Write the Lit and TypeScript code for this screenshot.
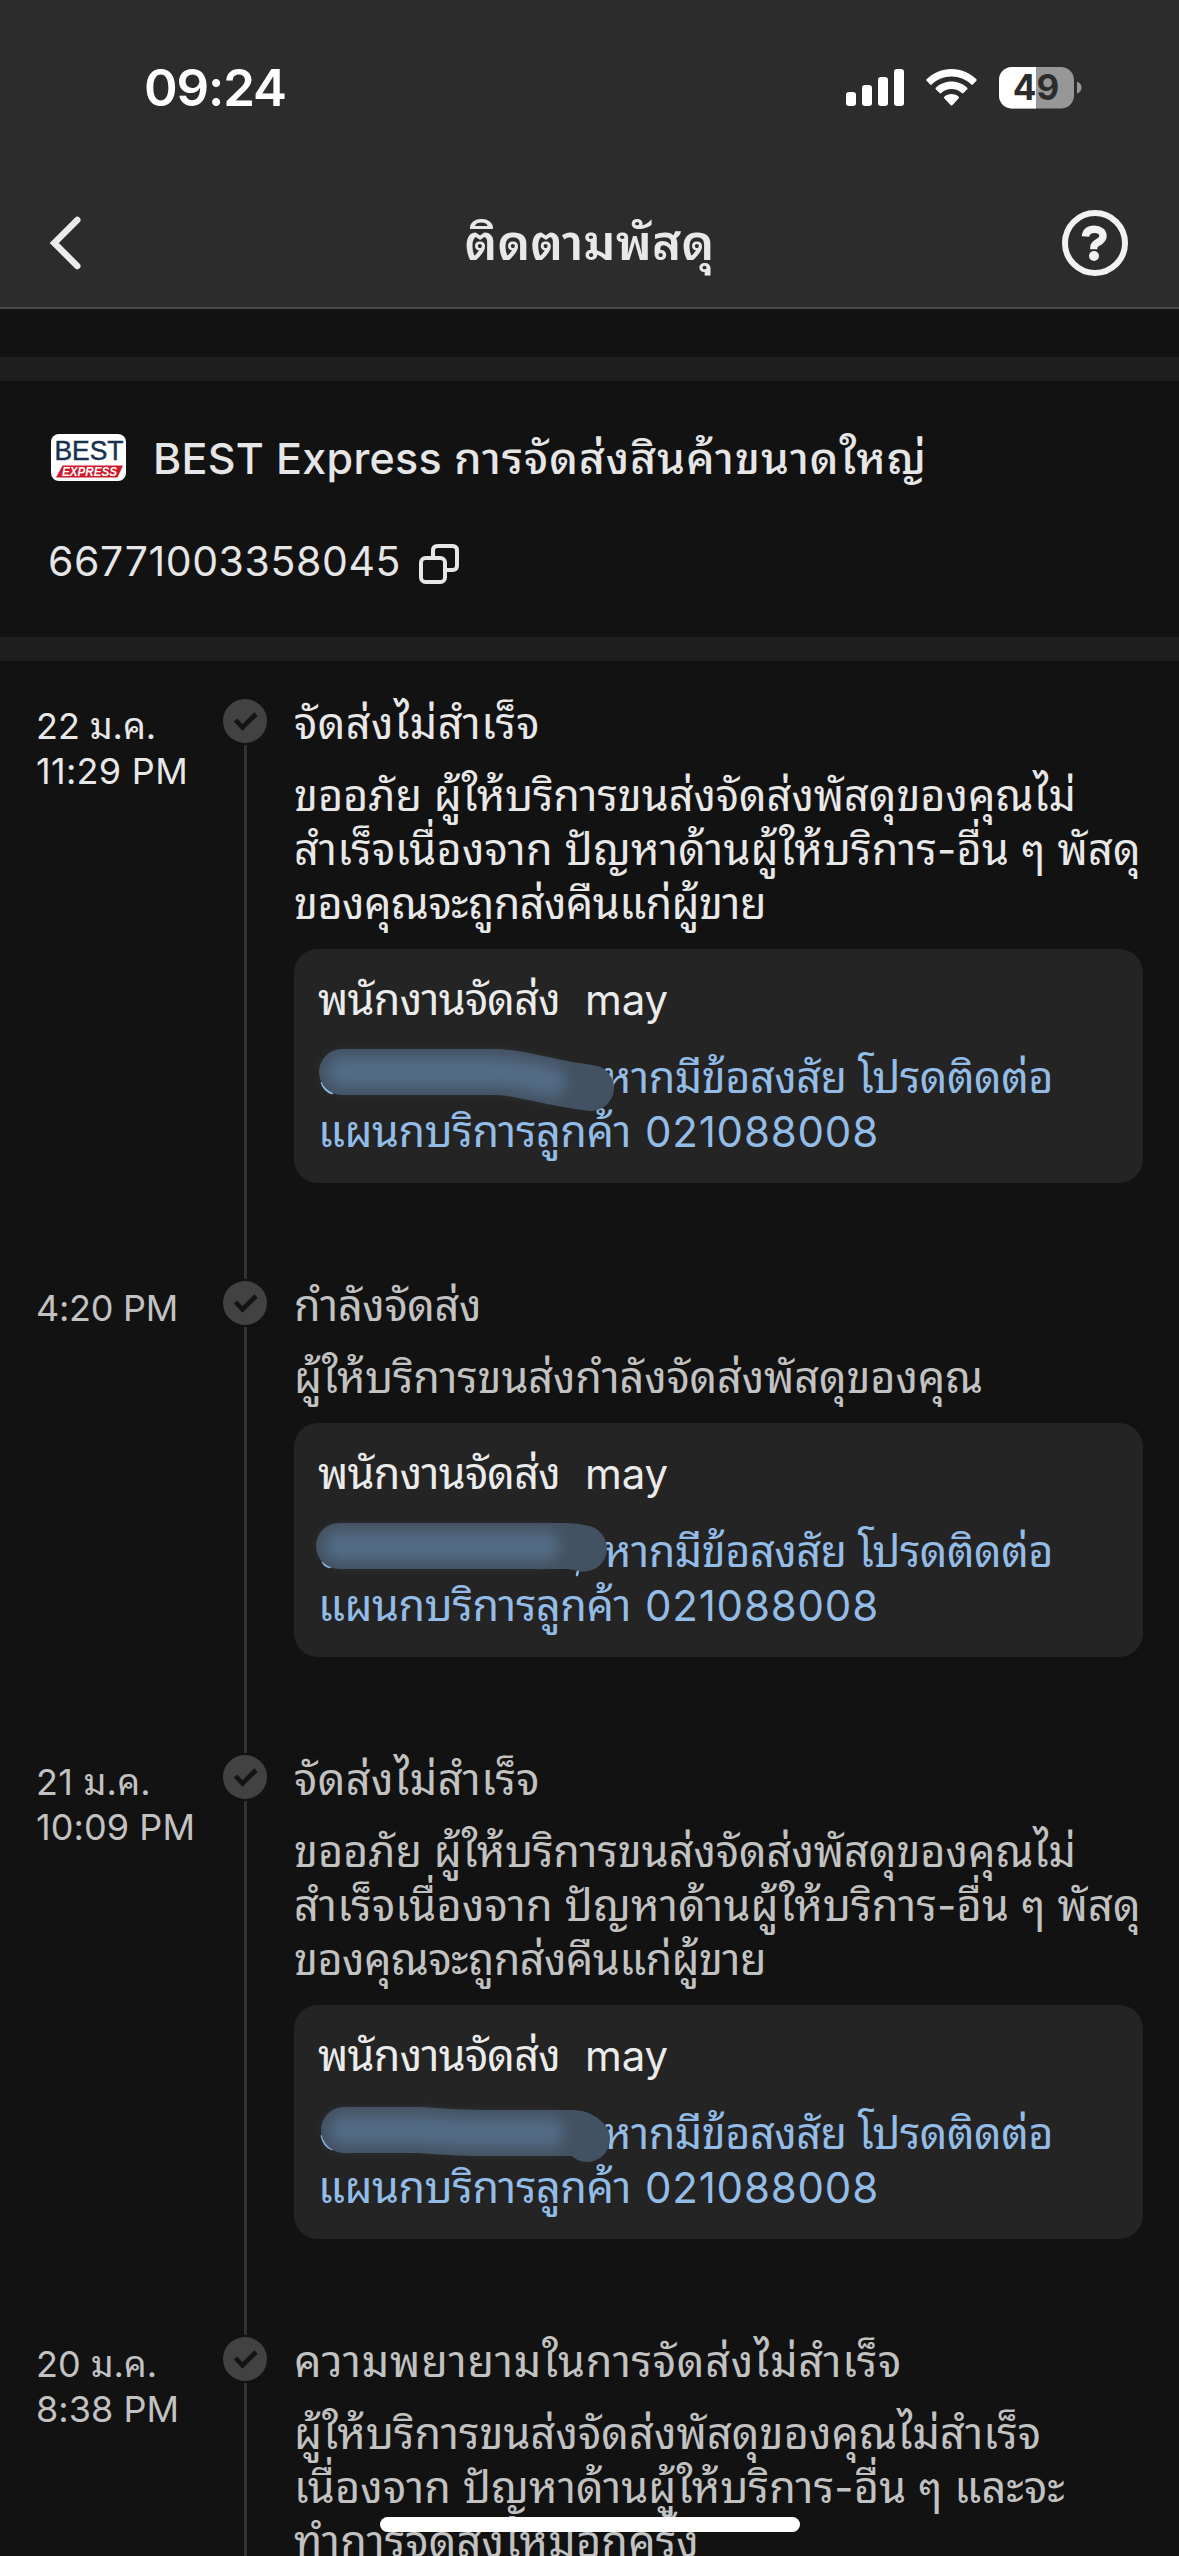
import { LitElement, html, svg, css } from "lit";
import { customElement } from "lit/decorators.js";
import { classMap } from "lit/directives/class-map.js";

interface Scribble {
  path: string;
  extra: string;
}

/** A line of text and the width in pixels it is tracked to. */
type Line = [text: string, width: number];

interface Step {
  date: Line[];
  title: Line;
  lines: Line[];
  current?: boolean;
  scribble?: Scribble;
}

const FAILED: Line[] = [
  ["ขออภัย ผู้ให้บริการขนส่งจัดส่งพัสดุของคุณไม่", 782],
  ["สำเร็จเนื่องจาก ปัญหาด้านผู้ให้บริการ-อื่น ๆ พัสดุ", 847],
  ["ของคุณจะถูกส่งคืนแก่ผู้ขาย", 472],
];

const STEPS: Step[] = [
  {
    date: [["22 ม.ค.", 120], ["11:29 PM", 152]],
    title: ["จัดส่งไม่สำเร็จ", 246],
    lines: FAILED,
    current: true,
    scribble: { path: "M48 123H201C228 123 252 134 297 139", extra: "M28 134Q31 142 38 144" },
  },
  {
    date: [["4:20 PM", 142]],
    title: ["กำลังจัดส่ง", 187],
    lines: [["ผู้ให้บริการขนส่งกำลังจัดส่งพัสดุของคุณ", 689]],
    scribble: { path: "M45 123H271Q281 123 290 125.500", extra: "M29 139Q31 143 36 144M284 148L283 152" },
  },
  {
    date: [["21 ม.ค.", 115], ["10:09 PM", 159]],
    title: ["จัดส่งไม่สำเร็จ", 246],
    lines: FAILED,
    scribble: { path: "M50 125H126Q160 128 196 128H279Q287 128 293 134", extra: "M28 131Q30 141 38 144" },
  },
  {
    date: [["20 ม.ค.", 121], ["8:38 PM", 143]],
    title: ["ความพยายามในการจัดส่งไม่สำเร็จ", 608],
    lines: [
      ["ผู้ให้บริการขนส่งจัดส่งพัสดุของคุณไม่สำเร็จ", 747],
      ["เนื่องจาก ปัญหาด้านผู้ให้บริการ-อื่น ๆ และจะ", 771],
      ["ทำการจัดส่งใหม่อีกครั้ง", 405],
    ],
  },
];

/** Wraps Thai runs so they take the looped Thai face. */
const mixed = (text: string) =>
  text
    .split(/([\u0E00-\u0E7F]+)/)
    .filter(Boolean)
    .map((run) => (/[\u0E00-\u0E7F]/.test(run) ? html`<span class="th">${run}</span>` : run));

/** One line of text whose letter spacing is set so that it fills a given width. */
@customElement("fit-line")
class FitLine extends LitElement {
  static properties = { line: { attribute: false } };
  declare line: Line;
  static styles = css`
    :host {
      display: block;
      white-space: nowrap;
    }
    .th {
      font-family: "Noto Sans Thai Looped", "Loma", sans-serif;
      font-size: var(--th, 1.03em);
      line-height: 1px;
    }
  `;
  render() {
    return html`<span class="run">${mixed(this.line[0])}</span>`;
  }
  firstUpdated() {
    const run = this.renderRoot.querySelector(".run") as HTMLElement;
    run.style.letterSpacing = "0.001px";
    const natural = run.getBoundingClientRect().width;
    run.style.letterSpacing = "1px";
    const steps = run.getBoundingClientRect().width - natural;
    run.style.letterSpacing = steps > 0 ? `${(this.line[1] - natural) / steps}px` : "";
  }
}

const fit = (line: Line) => html`<fit-line .line=${line}></fit-line>`;

@customElement("status-bar")
class StatusBar extends LitElement {
  static styles = css`
    :host {
      box-sizing: border-box;
      display: flex;
      justify-content: space-between;
      align-items: center;
      height: 176px;
      padding: 0 96px 0 144px;
      color: #fff;
    }
    .time {
      font-size: 51px;
      font-weight: 600;
      line-height: 60px;
    }
    .level {
      font: 700 35px "Inter", sans-serif;
    }
  `;
  render() {
    return html`
      <div class="time">${fit(["09:24", 142])}</div>
      <svg width="237" height="44" viewBox="846 66 237 44">
        <g fill="#fff">
          <rect x="846" y="92" width="10" height="14" rx="3" />
          <rect x="862" y="85" width="10" height="21" rx="3" />
          <rect x="878" y="77" width="10" height="29" rx="3" />
          <rect x="894" y="69" width="10" height="37" rx="3" />
          <path d="M951.500 69C942 69 933 72.800 926.600 79.200Q925.800 80 926.600 80.800L930.200 84.400Q931 85.200 931.800 84.400C937 79.400 944 76.500 951.500 76.500S966 79.400 971.200 84.400Q972 85.200 972.800 84.400L976.400 80.800Q977.200 80 976.400 79.200C970 72.800 961 69 951.500 69Z" />
          <path d="M951.500 81.500C945.500 81.500 940 83.800 935.800 87.700Q935 88.500 935.800 89.300L939.600 93.100Q940.400 93.900 941.200 93.100C944 90.500 947.600 89 951.500 89S959 90.500 961.800 93.100Q962.600 93.900 963.400 93.100L967.200 89.300Q968 88.500 967.200 87.700C963 83.800 957.500 81.500 951.500 81.500Z" />
          <path d="M951.500 94C948.700 94 946.200 95 944.300 96.700Q943.500 97.500 944.300 98.300L950.700 105.200Q951.500 106 952.300 105.200L958.700 98.300Q959.500 97.500 958.700 96.700C956.800 95 954.300 94 951.500 94Z" />
        </g>
        <clipPath id="cell"><rect x="999" y="67" width="75" height="41.500" rx="13" /></clipPath>
        <g clip-path="url(#cell)">
          <rect x="999" y="67" width="75" height="42" fill="#979797" />
          <rect x="999" y="67" width="37" height="42" fill="#fff" />
        </g>
        <path d="M1077 81.500Q1081.500 83.500 1081.500 87.500T1077 93.500Z" fill="#979797" />
        <text class="level" x="1036" y="100.300" text-anchor="middle" fill="#2c2c2c">49</text>
      </svg>
    `;
  }
}

@customElement("nav-header")
class NavHeader extends LitElement {
  static styles = css`
    :host {
      box-sizing: border-box;
      display: flex;
      justify-content: space-between;
      align-items: center;
      height: 133px;
      padding: 2px 49px 0 46px;
      border-bottom: 2px solid #4a4a4a;
    }
    .title {
      font-size: 48px;
      font-weight: 600;
      line-height: 72px;
      color: #e8e8e8;
      margin-left: 37px;
    }
  `;
  render() {
    return html`
      <svg width="36" height="66" viewBox="46 210 36 66" fill="none" stroke="#ebebeb" stroke-width="6.500" stroke-linecap="round">
        <path d="M77.300 220L54.300 243L77.300 266" />
      </svg>
      <div class="title">${fit(["ติดตามพัสดุ", 250])}</div>
      <svg width="70" height="70" viewBox="1060 208 70 70" fill="none" stroke="#f2f2f2">
        <circle cx="1095" cy="243" r="30" stroke-width="6" />
        <path d="M1085.500 236.500C1086 231.500 1089.500 229.300 1094.500 229.300C1099.500 229.300 1103 232 1103 236C1103 240 1100 241.300 1097 243C1094.500 244.400 1093.700 245.500 1093.700 249.300" stroke-width="7.400" />
        <circle cx="1094" cy="256" r="5" fill="#f2f2f2" stroke="none" />
      </svg>
    `;
  }
}

@customElement("parcel-summary")
class ParcelSummary extends LitElement {
  static styles = css`
    :host {
      box-sizing: border-box;
      display: flex;
      flex-direction: column;
      gap: 49px;
      height: 304px;
      padding: 50px 48px 0;
      border-top: 24px solid #1e1e1e;
      border-bottom: 24px solid #1e1e1e;
      color: #e6e6e6;
    }
    .carrier,
    .code {
      display: flex;
      align-items: center;
      height: 54px;
      line-height: 54px;
    }
    .carrier {
      gap: 26px;
      padding-left: 2px;
      font-size: 43px;
      font-weight: 500;
    }
    .name {
      display: flex;
      gap: 12px;
    }
    .code {
      gap: 18px;
      font-size: 41px;
    }
    .copy {
      margin-top: 6px;
    }
    .logo {
      margin-top: -1px;
    }
    .best {
      font: 400 27.5px "Liberation Sans", sans-serif;
    }
    .express {
      font: italic 700 12px "Liberation Sans", sans-serif;
    }
  `;
  render() {
    return html`
      <div class="carrier">
        <svg class="logo" width="77" height="47" viewBox="0 0 77 47">
          <rect x="1" width="75" height="47" rx="8" fill="#fff" />
          <text class="best" x="4.500" y="26.300" textLength="69" lengthAdjust="spacingAndGlyphs" fill="#16324f" stroke="#16324f" stroke-width="0.500">BEST</text>
          <path d="M12.500 31.500H73L67.500 43.500H6Z" fill="#cf1b2b" />
          <text class="express" x="12" y="41.800" textLength="55" lengthAdjust="spacingAndGlyphs" fill="#fff">EXPRESS</text>
        </svg>
        <div class="name">${fit(["BEST Express", 289])} ${fit(["การจัดส่งสินค้าขนาดใหญ่", 473])}</div>
      </div>
      <div class="code">
        ${fit(["66771003358045", 353])}
        <svg class="copy" width="40" height="40" viewBox="0 0 40 40" fill="none" stroke="#e6e6e6" stroke-width="4">
          <rect x="2" y="14" width="24" height="24" rx="4.500" />
          <path d="M14 14V6.500Q14 2 18.500 2H33.500Q38 2 38 6.500V21.500Q38 26 33.500 26H26" />
        </svg>
      </div>
    `;
  }
}

@customElement("track-step")
class TrackStep extends LitElement {
  static properties = { step: { attribute: false } };
  declare step: Step;
  static styles = css`
    :host {
      display: block;
    }
    .row {
      display: grid;
      grid-template-columns: 187px 44px 1fr;
      color: #c2c2c2;
    }
    .row.current {
      color: #e8e8e8;
    }
    .date {
      padding-top: 5px;
      font-size: 36px;
      line-height: 45px;
      --th: 36px;
    }
    .rail {
      display: flex;
      flex-direction: column;
      align-items: center;
      gap: 2px;
    }
    .disc {
      display: block;
    }
    .bar {
      flex: 1;
      width: 3px;
      margin-bottom: 2px;
      background: #333;
    }
    .content {
      margin: -2px 0 0 27px;
      padding-bottom: 98px;
      width: 849px;
      font-size: 42px;
      line-height: 54px;
    }
    .title {
      margin-bottom: 18px;
    }
    .courier {
      box-sizing: border-box;
      position: relative;
      margin-top: 18px;
      height: 234px;
      padding: 24px;
      border-radius: 24px;
      background: #242424;
      color: #ebebeb;
    }
    .who {
      display: flex;
      gap: 25px;
    }
    .phone {
      margin-top: 24px;
      color: #93bce6;
    }
    .first {
      padding-left: 285px;
    }
    .second {
      display: flex;
      gap: 14px;
    }
    .scribble {
      position: absolute;
      left: 0;
      top: 0;
    }
    .soft {
      filter: blur(7px);
    }
  `;
  render() {
    const { date, title, lines, current, scribble } = this.step;
    return html`
      <div class=${classMap({ row: true, current: !!current })}>
        <div class="date">${date.map(fit)}</div>
        <div class="rail">
          <svg class="disc" width="44" height="44" viewBox="0 0 44 44" fill="none">
            <circle cx="22" cy="22" r="22" fill="#424242" />
            <path d="M12.500 21L19.500 28.500L33 15" stroke="#141414" stroke-width="4.600" />
          </svg>
          <div class="bar"></div>
        </div>
        <div class="content">
          <div class="title">${fit(title)}</div>
          ${lines.map(fit)} ${scribble ? this.card(scribble) : null}
        </div>
      </div>
    `;
  }
  private card(s: Scribble) {
    return html`
      <div class="courier">
        <div class="who">${fit(["พนักงานจัดส่ง", 242])} ${fit(["may", 83])}</div>
        <div class="phone">
          <div class="first">${fit(["หากมีข้อสงสัย โปรดติดต่อ", 450])}</div>
          <div class="second">${fit(["แผนกบริการลูกค้า", 313])} ${fit(["021088008", 234])}</div>
        </div>
        <svg class="scribble" width="340" height="180" viewBox="0 0 340 180" fill="none" stroke-linecap="round" stroke-linejoin="round">
          ${svg`<path d=${s.extra} stroke="#93bce6" stroke-width="2.500" />
            <path d=${s.path} stroke="#435262" stroke-width="46" />
            <path class="soft" d=${s.path} stroke="#536c86" stroke-width="29" pathLength="100" stroke-dasharray="84 100" />`}
        </svg>
      </div>
    `;
  }
}

@customElement("app-root")
class AppRoot extends LitElement {
  static styles = css`
    :host {
      display: block;
      position: relative;
      width: 1179px;
      height: 2556px;
      overflow: hidden;
      background: #121212;
      font-family: "Inter", "Noto Sans", sans-serif;
    }
    .top {
      background: #2c2c2c;
    }
    .summary {
      margin-top: 48px;
    }
    .list {
      padding: 38px 36px 0;
    }
    .home {
      position: absolute;
      left: 380px;
      top: 2517px;
      width: 420px;
      height: 15px;
      border-radius: 8px;
      background: #fff;
    }
  `;
  render() {
    return html`
      <div class="top">
        <status-bar></status-bar>
        <nav-header></nav-header>
      </div>
      <parcel-summary class="summary"></parcel-summary>
      <div class="list">${STEPS.map((s) => html`<track-step .step=${s}></track-step>`)}</div>
      <div class="home"></div>
    `;
  }
}
